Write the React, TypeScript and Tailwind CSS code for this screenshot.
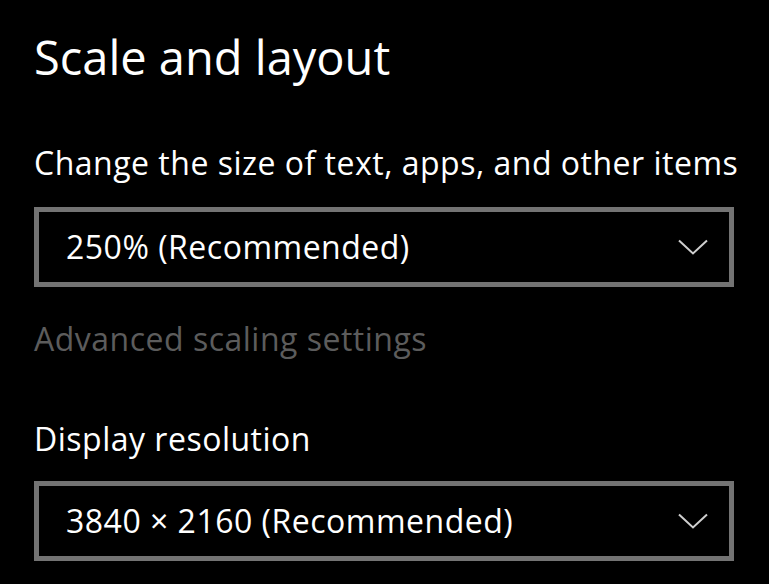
import React from 'react'

function Chevron() {
  return (
    <svg width="30" height="16" viewBox="0 0 30 16" fill="none" className="shrink-0">
      <path d="M1 1.5 L15 14.5 L29 1.5" stroke="#cfcfcf" strokeWidth="2" />
    </svg>
  )
}

function Dropdown({ value }: { value: string }) {
  return (
    <div className="flex items-center justify-between w-[700px] h-[80px] border-[5px] border-[#737373] pl-[27px] pr-[21px]">
      <span className="text-[32px] leading-none tracking-[0.5px] text-white">{value}</span>
      <Chevron />
    </div>
  )
}

export default function App() {
  return (
    <div
      className="w-[769px] h-[584px] overflow-hidden bg-black pl-[34px] text-white"
      style={{ fontFamily: '"Open Sans", "Noto Sans", sans-serif' }}
    >
      <h1 className="pt-[27px] text-[47px] leading-[60px] font-normal">Scale and layout</h1>

      <p className="mt-[56px] text-[32px] leading-[40px] tracking-[0.5px]">
        Change the size of text, apps, and other items
      </p>
      <div className="mt-[24px]">
        <Dropdown value="250% (Recommended)" />
      </div>

      <p className="mt-[32px] text-[32px] leading-[40px] tracking-[0.5px] text-[#5c5c5c]">
        Advanced scaling settings
      </p>

      <p className="mt-[60px] text-[32px] leading-[40px] tracking-[0.5px]">Display resolution</p>
      <div className="mt-[22px]">
        <Dropdown value="3840 × 2160 (Recommended)" />
      </div>
    </div>
  )
}
